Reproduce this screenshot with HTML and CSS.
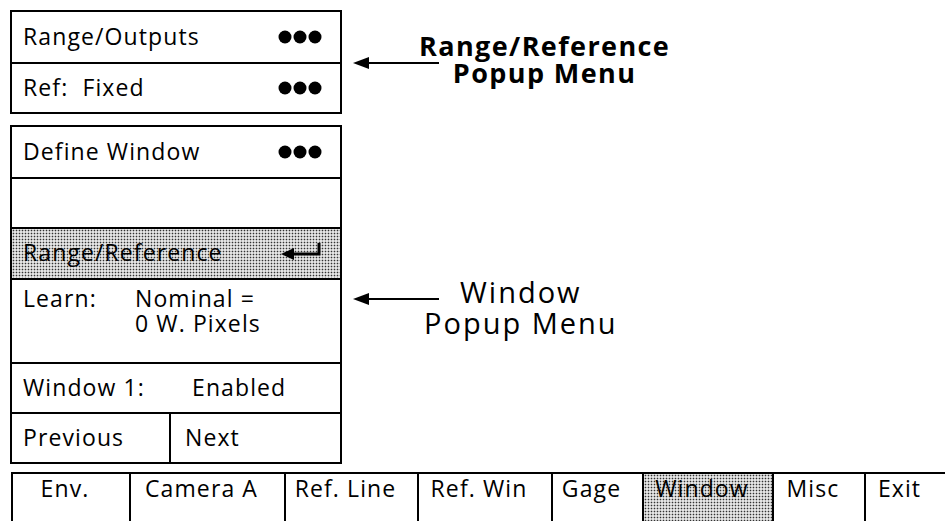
FILE: index.html
```html
<!doctype html>
<html lang="en">
<head>
	<meta charset="UTF-8">
	<title>Window Popup Menu</title>
	<link rel="stylesheet" href="styles.css">
</head>
<body>
	<div class="screen">
		<div class="menus">
			<div class="menu">
				<div class="row">Range/Outputs <svg class="dots" width="44" height="14" viewBox="0 0 44 14"><circle cx="7" cy="7" r="6.5"/><circle cx="22" cy="7" r="6.5"/><circle cx="37" cy="7" r="6.5"/></svg></div>
				<div class="row">Ref:&nbsp; Fixed <svg class="dots" width="44" height="14" viewBox="0 0 44 14"><circle cx="7" cy="7" r="6.5"/><circle cx="22" cy="7" r="6.5"/><circle cx="37" cy="7" r="6.5"/></svg></div>
			</div>
			<div class="menu second">
				<div class="row">Define Window <svg class="dots" width="44" height="14" viewBox="0 0 44 14"><circle cx="7" cy="7" r="6.5"/><circle cx="22" cy="7" r="6.5"/><circle cx="37" cy="7" r="6.5"/></svg></div>
				<div class="row"></div>
				<div class="row shade">Range/Reference <svg class="enter" width="44" height="20" viewBox="0 0 44 20"><path d="M12 14 H39 V3" fill="none" stroke="#000" stroke-width="3"/><path d="M1 14 L14 8 L14 20 Z"/></svg></div>
				<div class="row learn">
					<span class="key">Learn:</span>
					<span class="val">Nominal =<br>0 W. Pixels</span>
				</div>
				<div class="row"><span class="key wide">Window 1:</span><span>Enabled</span></div>
				<div class="row split">
					<div class="cell">Previous</div>
					<div class="cell">Next</div>
				</div>
			</div>
		</div>
		<div class="notes">
			<div class="note first">
				<svg class="arrow" width="86" height="14" viewBox="0 0 86 14"><path d="M0 7 L16 1 L16 13 Z"/><path d="M14 7 H86" stroke="#000" stroke-width="2"/></svg>
				<div class="label bold">Range/Reference<br>Popup Menu</div>
			</div>
			<div class="note second">
				<svg class="arrow" width="86" height="14" viewBox="0 0 86 14"><path d="M0 7 L16 1 L16 13 Z"/><path d="M14 7 H86" stroke="#000" stroke-width="2"/></svg>
				<div class="label">Window<br>Popup Menu</div>
			</div>
		</div>
	</div>
	<div class="tabs">
		<div class="tab">Env.</div>
		<div class="tab">Camera A</div>
		<div class="tab">Ref. Line</div>
		<div class="tab">Ref. Win</div>
		<div class="tab">Gage</div>
		<div class="tab shade">Window</div>
		<div class="tab">Misc</div>
		<div class="tab">Exit</div>
	</div>
</body>
</html>
```

FILE: styles.css
```css
*{padding: 0; margin: 0; box-sizing: border-box;}
body{
	font-family: "Open Sans", "Noto Sans", sans-serif; font-size: 23px;
	letter-spacing: 1.1px; color: #000; background: #fff; overflow: hidden;
}
.screen{display: flex; padding: 10px 0 0 10px;}
.menus{width: 332px;}
.menu{border: 2px solid #000;}
.menu.second{margin-top: 11px;}
.row{
	display: flex; align-items: center; justify-content: space-between;
	height: 50px; padding: 0 18px 3px 11px; border-top: 2px solid #000;
	white-space: nowrap;
}
.row:first-child{border-top: 0;}
.dots{margin-top: 3px;}
.row.learn{
	height: 84px; justify-content: flex-start; align-items: flex-start;
	padding-top: 6px; line-height: 25px;
}
.key{width: 112px;}
.key.wide{width: 169px;}
.row:has(.wide){justify-content: flex-start;}
.row.shade{height: 51px;}
.shade{
	background-color: #e4e4e4;
	background-image: radial-gradient(circle, #333 0.7px, transparent 1.1px);
	background-size: 3px 3px;
}
.enter{margin: 0 -2px 4px 0;}
.row.split{padding: 0; justify-content: flex-start;}
.cell{height: 100%; display: flex; align-items: center; padding: 0 0 3px 11px;}
.cell:first-child{width: 159px; border-right: 2px solid #000;}
.cell:last-child{padding-left: 14px;}
.notes{margin-left: 11px;}
.note{display: flex; align-items: flex-start;}
.note.first{margin-top: 22px;}
.note.first .arrow{margin-top: 24px;}
.note.second{margin-top: 190px;}
.note.second .arrow{margin-top: 16px;}
.arrow{flex: none;}
.label{text-align: center; white-space: nowrap;}
.label.bold{
	font-size: 27px; font-weight: bold; line-height: 27px;
	letter-spacing: 1.4px; margin-left: -20px;
}
.note.second .label{
	font-size: 29px; line-height: 31px; letter-spacing: 2px; margin-left: -15px;
}
.tabs{
	display: grid; margin: 8px 0 0 11px; height: 60px;
	grid-template-columns: 118px 155px 133px 134px 91px 130px 92px 1fr;
	border-top: 2px solid #000;
}
.tab{
	border-left: 2px solid #000; padding: 1px 12px 0 0;
	line-height: 26px; text-align: center; white-space: nowrap;
}
```
